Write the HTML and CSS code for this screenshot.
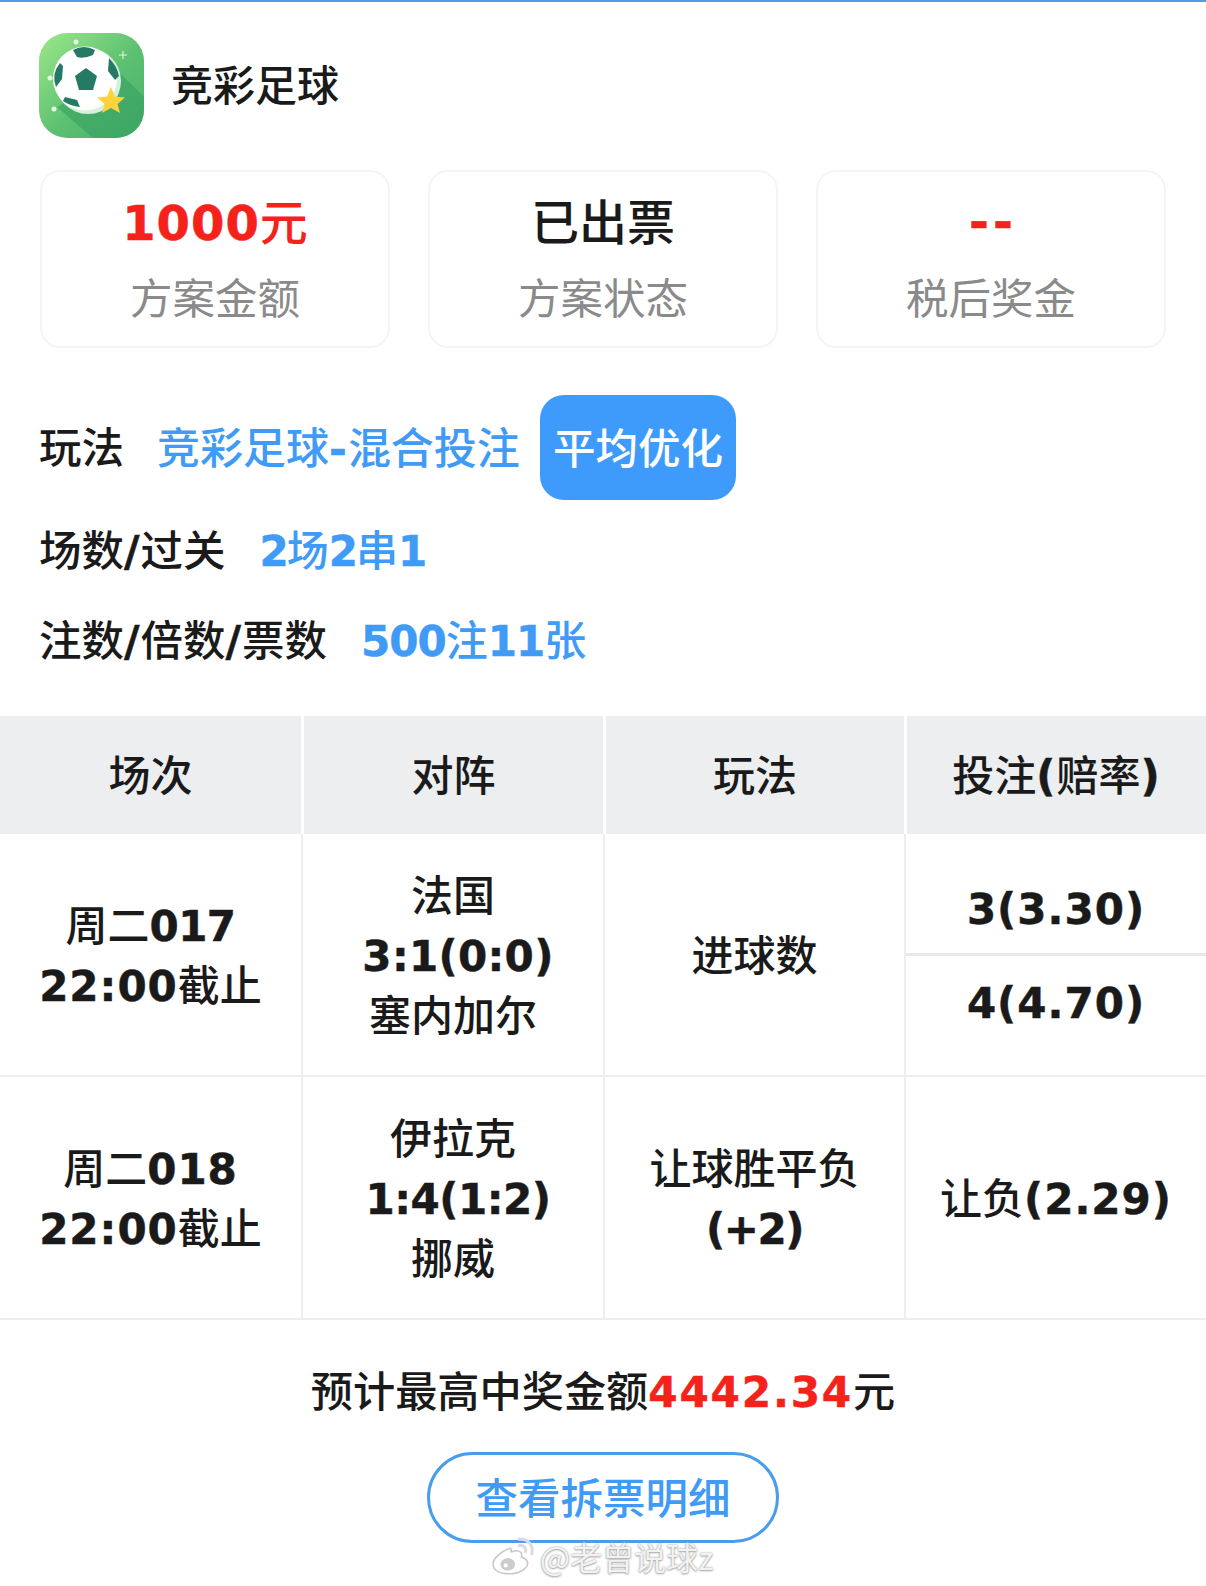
FILE: index.html
```html
<!DOCTYPE html>
<html>
<head>
  <meta charset="utf-8">
  <title>竞彩足球</title>
  <link rel="stylesheet" href="styles.css">
</head>
<body>
  <div class="page">
    <div class="top-line"></div>

    <div class="head">
      <svg class="logo" viewBox="0 0 105 105" width="105" height="105">
        <defs>
          <linearGradient id="bg" x1="0" y1="0" x2="1" y2="1">
            <stop offset="0" stop-color="#9de888"/>
            <stop offset="0.55" stop-color="#5cc072"/>
            <stop offset="1" stop-color="#48b06a"/>
          </linearGradient>
          <clipPath id="round"><rect width="105" height="105" rx="28"/></clipPath>
        </defs>
        <g clip-path="url(#round)">
          <rect width="105" height="105" fill="url(#bg)"/>
          <path d="M18 74 L81 40 L105 64 L105 105 L54 105 Z" fill="#35a060" opacity="0.6"/>
          <circle cx="49" cy="48" r="33" fill="#d6f0de"/>
          <circle cx="46" cy="45.500" r="32" fill="#fff"/>
          <path d="M47 35 L58 43 L54 57 L40 57 L36 43 Z" fill="#257a66"/>
          <path d="M34 17 Q45 11 56 17 L54 22 Q45 26 38 24 Z" fill="#257a66"/>
          <path d="M70 25 Q78 33 80 43 L76 47 L69 38 Z" fill="#257a66"/>
          <path d="M21 30 L24 33 L23 46 L17 54 Q12 41 21 30 Z" fill="#257a66"/>
          <path d="M26 64 L38 67 L41 74 Q31 73 24 68 Z" fill="#257a66"/>
          <circle cx="37" cy="9" r="2.500" fill="#e4f8e2"/>
          <circle cx="11" cy="45" r="2.500" fill="#e4f8e2"/>
          <circle cx="15" cy="76" r="2.500" fill="#e4f8e2"/>
          <path d="M84 18 V26 M80 22 H88" stroke="#e4f8e2" stroke-width="1"/>
          <path d="M72 54 L76 63.500 L86 64.500 L78.500 71 L81 80 L72 75 L63 80 L65.500 71 L58 64.500 L68 63.500 Z" fill="#fdd23a"/>
        </g>
      </svg>
      <div class="head-title">竞彩足球</div>
    </div>

    <div class="cards">
      <div class="card">
        <div class="card-value red"><span class="num">1000</span>元</div>
        <div class="card-label">方案金额</div>
      </div>
      <div class="card">
        <div class="card-value">已出票</div>
        <div class="card-label">方案状态</div>
      </div>
      <div class="card">
        <div class="card-value red"><span class="num dashes">--</span></div>
        <div class="card-label">税后奖金</div>
      </div>
    </div>

    <div class="info">
      <div class="info-row first">
        <span class="info-label">玩法</span>
        <span class="info-value">竞彩足球<span class="num">-</span>混合投注</span>
        <span class="tag">平均优化</span>
      </div>
      <div class="info-row">
        <span class="info-label">场数<span class="num">/</span>过关</span>
        <span class="info-value"><span class="num">2</span>场<span class="num">2</span>串<span class="num">1</span></span>
      </div>
      <div class="info-row">
        <span class="info-label">注数<span class="num">/</span>倍数<span class="num">/</span>票数</span>
        <span class="info-value"><span class="num count">500</span>注<span class="num count">11</span>张</span>
      </div>
    </div>

    <table class="match-table">
      <colgroup>
        <col class="col-a"><col class="col-b"><col class="col-a"><col class="col-b">
      </colgroup>
      <thead>
        <tr>
          <th>场次</th>
          <th>对阵</th>
          <th>玩法</th>
          <th>投注<span class="num">(</span>赔率<span class="num">)</span></th>
        </tr>
      </thead>
      <tbody>
        <tr>
          <td>周二<span class="num tight">017</span><br><span class="num">22:00</span>截止</td>
          <td>法国<br><span class="num score">3:1(0:0)</span><br>塞内加尔</td>
          <td>进球数</td>
          <td class="bets">
            <div class="bet"><span class="num">3(3.30)</span></div>
            <div class="bet"><span class="num">4(4.70)</span></div>
          </td>
        </tr>
        <tr>
          <td>周二<span class="num">018</span><br><span class="num">22:00</span>截止</td>
          <td>伊拉克<br><span class="num score score-narrow">1:4(1:2)</span><br>挪威</td>
          <td>让球胜平负<br><span class="num handicap">(+2)</span></td>
          <td>让负<span class="num">(2.29)</span></td>
        </tr>
      </tbody>
    </table>

    <div class="summary">预计最高中奖金额<span class="num red wide">4442.34</span>元</div>
    <div class="btn-wrap"><div class="detail-btn">查看拆票明细</div></div>

    <div class="watermark">
      <svg viewBox="0 0 44 38" width="46" height="40">
        <path d="M18 12 C8 16 2 23 3 28 C4 34 12 36 19 36 C28 36 36 31 36 26 C36 22 32 21 30 20 C31 16 29 14 25 14 C23 14 21 15 20 15 C21 12 20 11 18 12 Z" fill="#fff" stroke="#c8c8c8" stroke-width="1.500"/>
        <ellipse cx="17" cy="27" rx="7" ry="6" fill="#ccc"/>
        <circle cx="15" cy="28" r="2" fill="#fff"/>
        <path d="M28 3 C36 2 42 9 40 17 M28 9 C32 8 35 12 34 15" fill="none" stroke="#ddd" stroke-width="3" stroke-linecap="round"/>
      </svg>
      <span class="wm-text">@老曾说球z</span>
    </div>
  </div>
</body>
</html>
```

FILE: styles.css
```css
body {
  margin: 0;
  background: #ffffff;
  color: #1a1a1a;
  font-family: "Noto Sans CJK SC", sans-serif;
  font-size: 42px;
}
.page {
  position: relative;
  width: 1206px;
  height: 1586px;
  overflow: hidden;
}
.top-line {
  height: 2px;
  background: #4a9dec;
}
.num {
  font-family: "DejaVu Sans", sans-serif;
  font-weight: 700;
  line-height: 0;
  letter-spacing: 1px;
  -webkit-text-stroke: 0.5px currentColor;
}
.red {
  color: #f5221c;
}

.head {
  display: flex;
  align-items: center;
  gap: 27px;
  padding: 31px 0 0 39px;
}
.logo {
  display: block;
}
.head-title {
  font-weight: 500;
  line-height: 100px;
  padding-bottom: 5px;
}

.cards {
  display: flex;
  gap: 38px;
  padding: 32px 40px 0;
}
.card {
  width: 350px;
  height: 178px;
  box-sizing: border-box;
  border: 2px solid #f5f5f5;
  border-radius: 20px;
  text-align: center;
  padding-top: 17px;
}
.card-value {
  font-size: 48px;
  font-weight: 500;
  line-height: 60px;
}
.dashes {
  letter-spacing: 4px;
  padding-left: 4px;
  vertical-align: 2px;
}
.card-label {
  color: #8a8a8a;
  font-size: 42.500px;
  line-height: 60px;
  margin-top: 17px;
}

.info {
  padding: 47px 0 0 39px;
}
.info-row {
  display: flex;
  align-items: center;
  height: 90px;
  gap: 34px;
  font-size: 42.500px;
  font-weight: 500;
  padding-bottom: 6px;
  box-sizing: border-box;
}
.info-row.first {
  height: 105px;
  margin-bottom: 5px;
  padding-bottom: 0;
  gap: 33px;
}
.info-row.first .info-label,
.info-row.first .info-value {
  margin-bottom: 6px;
}
.info-value {
  color: #3f9bf5;
  font-size: 42px;
}
.info-row.first .info-value {
  font-size: 43px;
}
.info-value .num {
  letter-spacing: -2px;
}
.info-row.first .info-value .num {
  letter-spacing: 1px;
}
.info-value .count {
  letter-spacing: -1px;
}
.tag {
  background: #3f9bfb;
  color: #ffffff;
  border-radius: 24px;
  height: 105px;
  line-height: 102px;
  padding: 0 13px;
  margin-left: -13px;
  box-sizing: border-box;
}

.match-table {
  width: 1206px;
  margin-top: 31px;
  table-layout: fixed;
  border-collapse: separate;
  border-spacing: 0;
  border-bottom: 2px solid #eeeeee;
}
.col-a {
  width: 301px;
}
.col-b {
  width: 302px;
}
.match-table th {
  height: 112px;
  padding: 0 0 6px;
  background: #eceef0;
  font-weight: 500;
  border-left: 3px solid #ffffff;
}
.match-table td {
  height: 237px;
  padding: 0 0 4px;
  text-align: center;
  line-height: 60px;
  font-weight: 500;
  border-left: 2px solid #eeeeee;
  border-top: 2px solid #eeeeee;
}
.match-table tbody tr:first-child td {
  border-top: none;
}
.match-table th:first-child,
.match-table td:first-child {
  border-left: none;
}
.match-table td.bets {
  padding: 0;
}
.tight {
  letter-spacing: -0.500px;
}
.score {
  letter-spacing: 0.300px;
  padding-left: 10px;
}
.score-narrow {
  letter-spacing: -0.500px;
}
.handicap {
  letter-spacing: -1.500px;
}
.bet {
  height: 94px;
  line-height: 88px;
}
.bet:first-child {
  border-bottom: 3px solid #e8e8ea;
  box-sizing: border-box;
  height: 96px;
  line-height: 92px;
}

.summary {
  margin-top: 39px;
  text-align: center;
  font-size: 42.200px;
  line-height: 60px;
  font-weight: 500;
}
.wide {
  letter-spacing: 1.800px;
}
.btn-wrap {
  display: flex;
  justify-content: center;
  margin-top: 33px;
}
.detail-btn {
  width: 352px;
  height: 91px;
  box-sizing: border-box;
  border: 3px solid #4a9dec;
  border-radius: 46px;
  color: #3f9bf5;
  font-size: 42.500px;
  font-weight: 500;
  text-align: center;
  line-height: 82px;
}

/* weibo mark sits over the button edge */
.watermark {
  position: absolute;
  left: 490px;
  top: 1536px;
  display: flex;
  align-items: center;
  gap: 4px;
}
.wm-text {
  font-size: 32px;
  line-height: 38px;
  color: #f2f2f2;
  text-shadow: 0 0 2px #9a9a9a, 0 1px 2px #b0b0b0;
}
```
